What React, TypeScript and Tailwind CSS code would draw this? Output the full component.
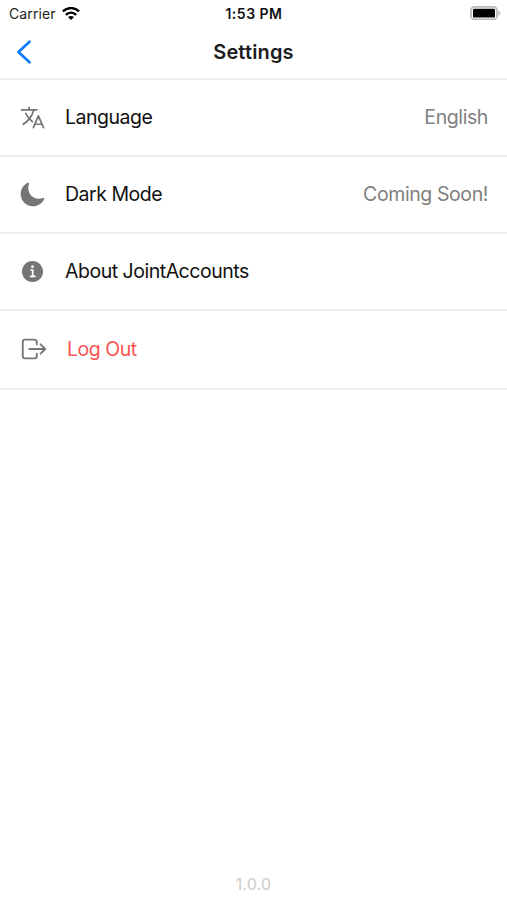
import { ReactNode } from "react"
import { clsx } from "clsx"
import {
  IoInformationCircle,
  IoLanguageOutline,
  IoLogOutOutline,
  IoMoon,
} from "react-icons/io5"

function WifiIcon() {
  return (
    <svg width="18" height="14" viewBox="0 0 18 14" fill="none" stroke="black">
      <path d="M.9 4.4C5.5 0 12.5 0 17.1 4.4" strokeWidth="2.5" />
      <path d="M3.8 7.8c3-2.9 7.4-2.9 10.4 0" strokeWidth="2.4" />
      <path d="M9 13 6 10.1c1.7-1.5 4.3-1.5 6 0Z" fill="black" stroke="none" />
    </svg>
  )
}

function BatteryIcon() {
  return (
    <svg width="31" height="14" viewBox="0 0 31 14" fill="none">
      <rect x="1" y="0.9" width="26" height="12.6" rx="3.6" stroke="#b9b9b9" strokeWidth="1.8" />
      <rect x="3" y="2.8" width="22" height="8.8" rx="1.2" fill="black" />
      <path d="M28.4 4.8c2.6 1 2.6 3.8 0 4.8Z" fill="#b9b9b9" />
    </svg>
  )
}

function StatusBar() {
  return (
    <div className="grid h-[27px] grid-cols-3 items-center pr-[6px] pl-[9px]">
      <div className="flex items-center gap-[6px]">
        <span className="text-[14px] tracking-[0.1px] text-[#222]">Carrier</span>
        <WifiIcon />
      </div>
      <span className="pr-[2px] text-center text-[14px] font-semibold tracking-[0.5px] text-[#111]">
        1:53 PM
      </span>
      <div className="flex justify-end pb-px">
        <BatteryIcon />
      </div>
    </div>
  )
}

function Header() {
  return (
    <div className="grid h-[53px] grid-cols-3 items-center border-b-2 border-[#eeeeee] px-4 pb-px">
      <svg width="16" height="24" viewBox="0 0 16 24" fill="none">
        <path
          d="M13.5 1.8 2.5 12l11 10.2"
          stroke="#0a7aff"
          strokeWidth="2.7"
          strokeLinecap="round"
          strokeLinejoin="round"
        />
      </svg>
      <h1 className="text-center text-[20px] font-semibold tracking-[0.15px] text-[#1c1c1e]">
        Settings
      </h1>
    </div>
  )
}

function SettingsRow({
  icon,
  label,
  value,
  danger,
}: {
  icon: ReactNode
  label: string
  value?: string
  danger?: boolean
}) {
  return (
    <div
      className={clsx(
        "flex items-center border-b-2 border-[#eeeeee] pr-[19px] text-[19.5px] tracking-[-0.48px]",
        danger ? "h-[79px] pl-[19px]" : "h-[77px] pl-[17px]"
      )}
    >
      <div className="flex w-[30px] justify-center pb-px text-[#757575]">
        {icon}
      </div>
      <span
        className={clsx(
          danger ? "ml-[18px] text-[#fb5454]" : "ml-[18px] text-[#111]"
        )}
      >
        {label}
      </span>
      {value && (
        <span className="ml-auto tracking-[-0.4px] text-[#808080]">
          {value}
        </span>
      )}
    </div>
  )
}

export default function App() {
  return (
    <div className="flex h-[900px] w-full flex-col bg-white font-['Inter','Liberation_Sans',sans-serif]">
      <StatusBar />
      <Header />
      <SettingsRow
        icon={<IoLanguageOutline size={27} />}
        label="Language"
        value="English"
      />
      <SettingsRow
        icon={<IoMoon size={27} />}
        label="Dark Mode"
        value="Coming Soon!"
      />
      <SettingsRow
        icon={<IoInformationCircle size={27} />}
        label="About JointAccounts"
      />
      <SettingsRow icon={<IoLogOutOutline size={30} />} label="Log Out" danger />
      <div className="mt-auto pb-[4px] text-center text-[16px] tracking-[0.2px] text-[#cccccc]">
        1.0.0
      </div>
    </div>
  )
}
